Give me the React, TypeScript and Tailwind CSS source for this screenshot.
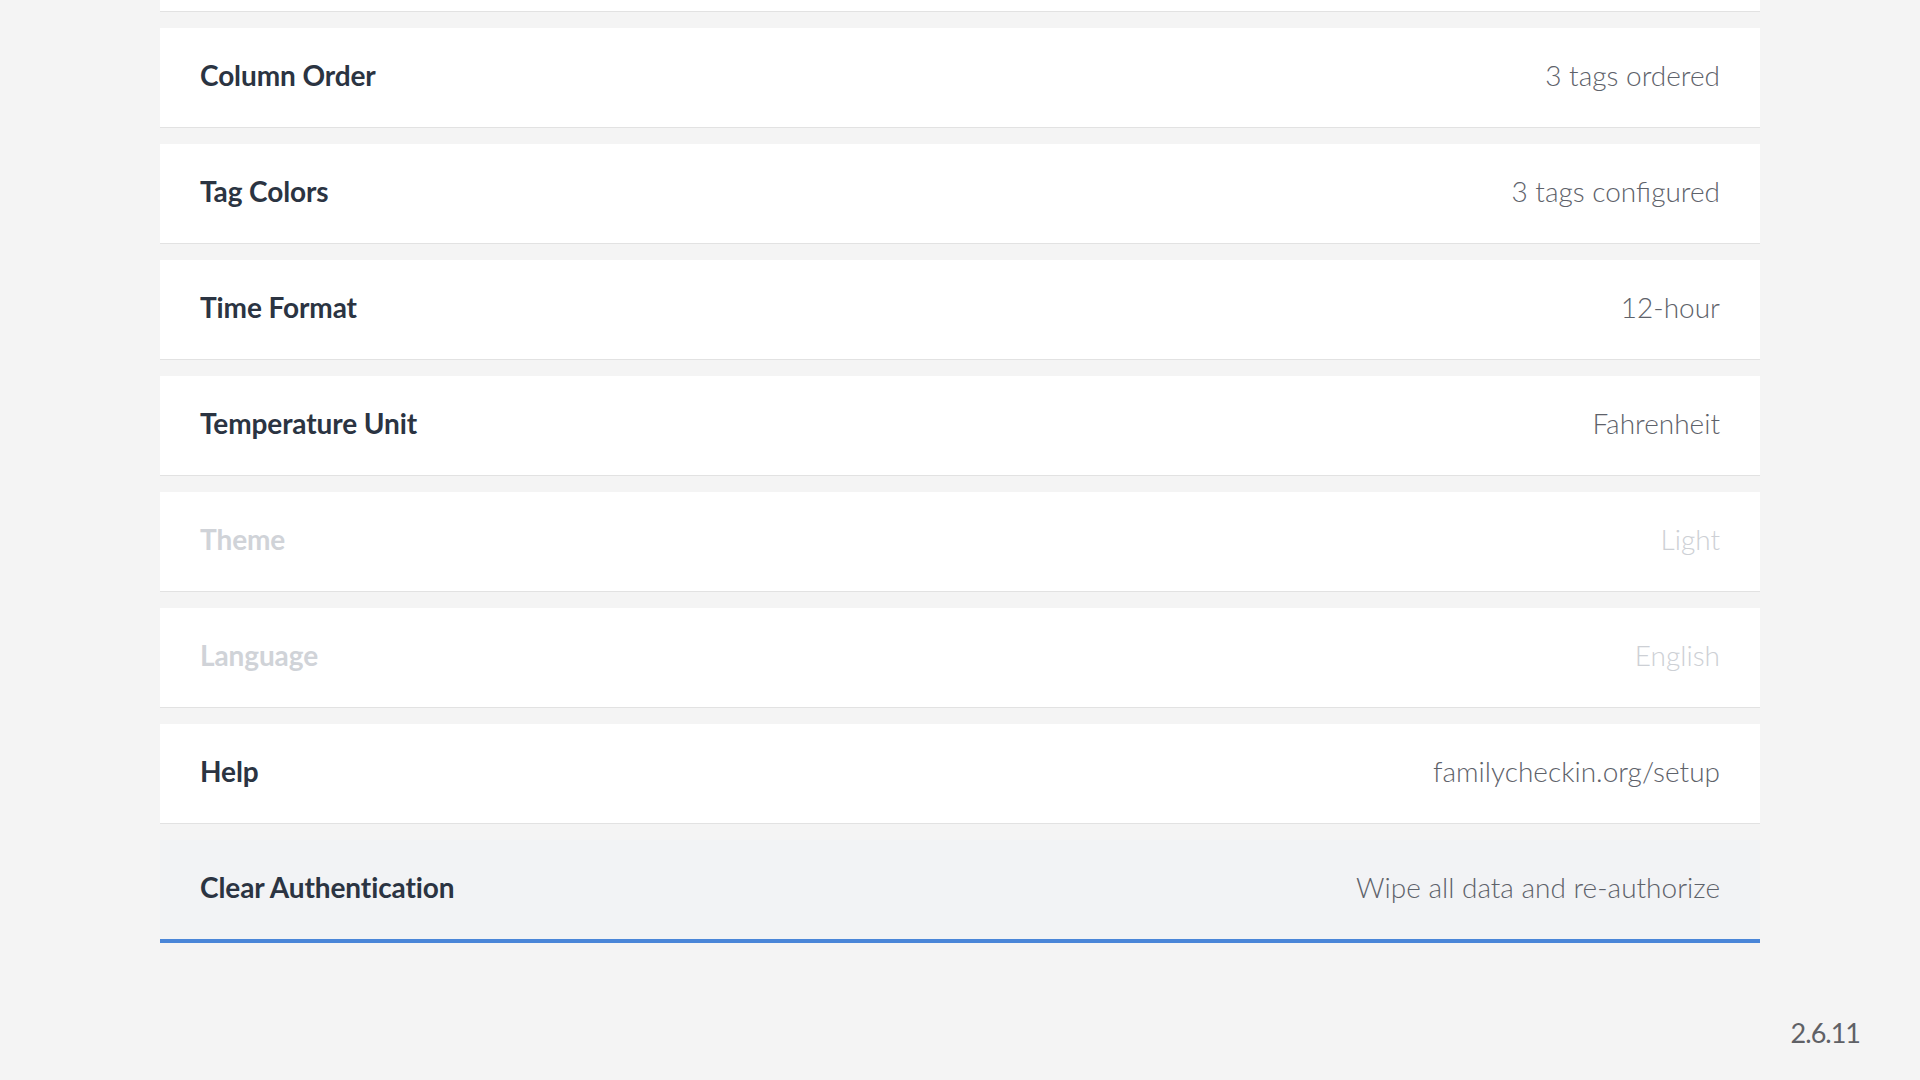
import React from "react";

type Row = { label: string; value: string; disabled?: boolean; active?: boolean };

const rows: Row[] = [
  { label: "", value: "" },
  { label: "Column Order", value: "3 tags ordered" },
  { label: "Tag Colors", value: "3 tags configured" },
  { label: "Time Format", value: "12-hour" },
  { label: "Temperature Unit", value: "Fahrenheit" },
  { label: "Theme", value: "Light", disabled: true },
  { label: "Language", value: "English", disabled: true },
  { label: "Help", value: "familycheckin.org/setup" },
  { label: "Clear Authentication", value: "Wipe all data and re-authorize", active: true },
];

export default function App() {
  return (
    <div
      className="relative h-[1080px] w-[1920px] overflow-hidden bg-[#f4f4f4]"
      style={{ fontFamily: "Lato, 'Noto Sans', sans-serif" }}
    >
      <div className="mx-[160px] -mt-[88px] flex flex-col gap-4">
        {rows.map((r, i) => (
          <div
            key={i}
            className={
              r.active
                ? "flex h-[103px] items-center justify-between border-b-4 border-[#4a86d8] bg-[#f2f3f5] px-10 pb-[5px]"
                : "flex h-[100px] items-center justify-between border-b border-[#e2e2e2] bg-white px-10 pb-[5px]"
            }
          >
            <span
              className={
                r.disabled
                  ? "text-[28px] font-bold tracking-[-0.1px] text-[#d0d3d8]"
                  : "text-[28px] font-bold tracking-[-0.1px] text-[#2b3442]"
              }
            >
              {r.label}
            </span>
            <span
              className={
                r.disabled
                  ? "text-[28px] font-light text-[#cdd0d5]"
                  : "text-[28px] font-light text-[#5e626a]"
              }
            >
              {r.value}
            </span>
          </div>
        ))}
      </div>
      <div className="absolute bottom-[27px] right-[60px] text-[27px] tracking-[-1px] text-[#5f6166]">
        2.6.11
      </div>
    </div>
  );
}
